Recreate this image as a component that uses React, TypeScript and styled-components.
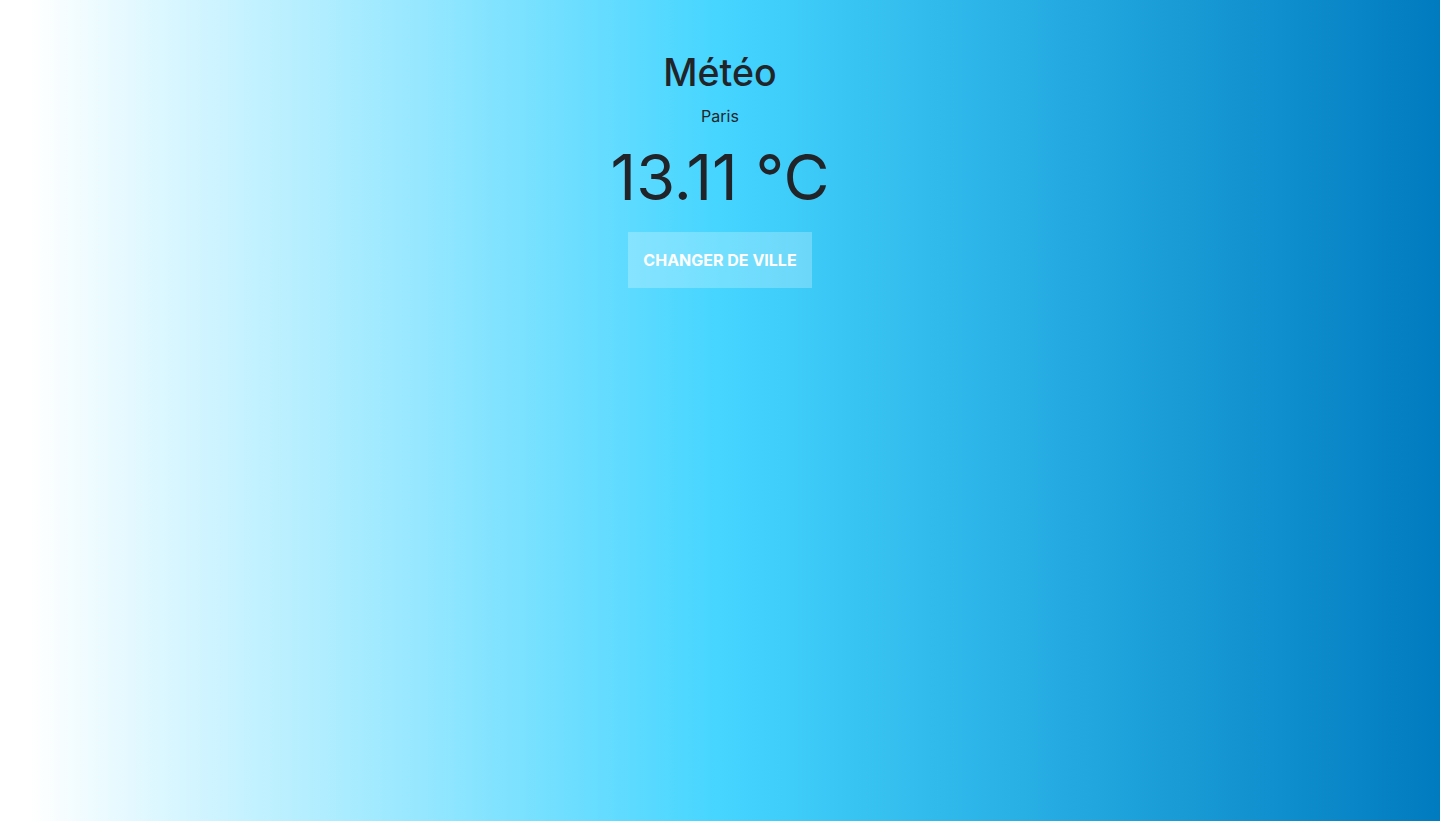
import React from 'react'
import styled, { createGlobalStyle } from 'styled-components'

const GlobalStyle = createGlobalStyle`
  html, body {
    margin: 0;
    padding: 0;
    height: 100%;
  }
  body {
    font-family: Inter, "Noto Sans", sans-serif;
    color: #212529;
  }
  #root {
    min-height: 100vh;
  }
`

const App: React.FC = () => {
  return (
    <Page>
      <GlobalStyle />
      <Weather>
        <Title>Météo</Title>
        <City>Paris</City>
        <Temperature>13.11 °C</Temperature>
        <ChangeButton>Changer de ville</ChangeButton>
      </Weather>
    </Page>
  )
}

const Page = styled.div`
  min-height: 100vh;
  box-sizing: border-box;
  background: linear-gradient(to right, #ffffff 2%, #45d5ff 50%, #007bbf 100%);
  display: flex;
  justify-content: center;
  padding-top: 50px;
`

const Weather = styled.div`
  display: flex;
  flex-direction: column;
  align-items: center;
`

const Title = styled.h1`
  margin: 0;
  font-size: 37.5px;
  font-weight: 500;
  line-height: 45px;
`

const City = styled.div`
  margin-top: 9px;
  font-size: 16px;
  line-height: 1.5;
`

const Temperature = styled.div`
  margin-top: 12px;
  font-size: 63px;
  font-weight: 400;
  line-height: 1.2;
`

const ChangeButton = styled.button`
  margin-top: 16px;
  width: 184px;
  height: 56px;
  border: none;
  background: rgba(255, 255, 255, 0.25);
  color: #ffffff;
  font-family: Inter, "Noto Sans", sans-serif;
  font-size: 16px;
  font-weight: 700;
  text-transform: uppercase;
  cursor: pointer;
`

export default App
